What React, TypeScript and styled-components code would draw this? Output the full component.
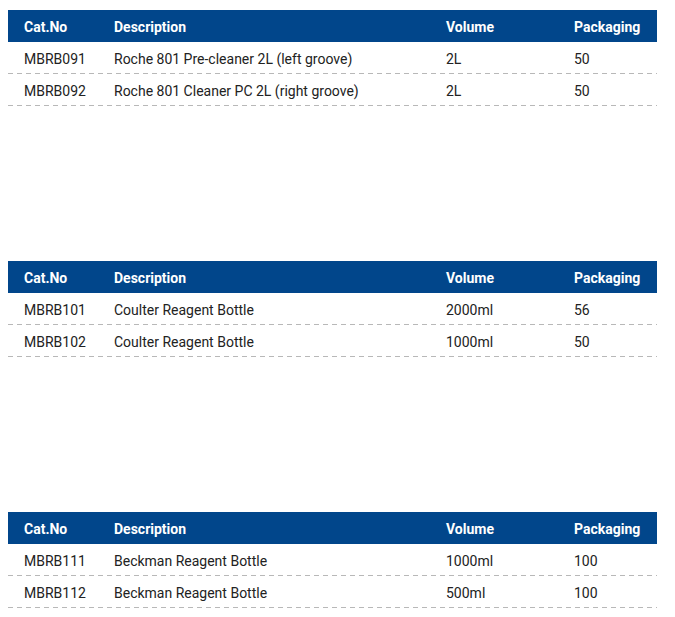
import React from "react";
import styled, { createGlobalStyle } from "styled-components";

const Global = createGlobalStyle`
  body {
    margin: 8px;
    background: #ffffff;
    font-family: Roboto, "Liberation Sans", Arial, sans-serif;
  }
`;

const Page = styled.div`
  display: flex;
  flex-direction: column;
  gap: 155px;
  padding-top: 2px;
  width: 649px;
`;

const Table = styled.div`
  display: flex;
  flex-direction: column;
`;

const Row = styled.div<{ $head?: boolean }>`
  display: grid;
  grid-template-columns: 90px 332px 128px 1fr;
  height: 32px;
  align-items: center;
  box-sizing: border-box;
  font-size: 14px;
  ${(p) =>
    p.$head
      ? `
    background: #01468b;
    color: #ffffff;
    font-weight: 700;
  `
      : `
    color: #222222;
    font-weight: 400;
    background-image: linear-gradient(to right, #b8b8b8 5px, transparent 5px);
    background-size: 9px 1px;
    background-repeat: repeat-x;
    background-position: 0 100%;
  `}
`;

const Cell = styled.div`
  padding-left: 16px;
  padding-top: 2px;
  white-space: nowrap;
  line-height: 30px;
`;

type Item = [string, string, string, string];

const tables: Item[][] = [
  [
    ["MBRB091", "Roche 801 Pre-cleaner 2L (left groove)", "2L", "50"],
    ["MBRB092", "Roche 801 Cleaner PC 2L (right groove)", "2L", "50"],
  ],
  [
    ["MBRB101", "Coulter Reagent Bottle", "2000ml", "56"],
    ["MBRB102", "Coulter Reagent Bottle", "1000ml", "50"],
  ],
  [
    ["MBRB111", "Beckman Reagent Bottle", "1000ml", "100"],
    ["MBRB112", "Beckman Reagent Bottle", "500ml", "100"],
  ],
];

const heads = ["Cat.No", "Description", "Volume", "Packaging"];

export default function App() {
  return (
    <>
      <Global />
      <Page>
        {tables.map((rows, i) => (
          <Table key={i}>
            <Row $head>
              {heads.map((h) => (
                <Cell key={h}>{h}</Cell>
              ))}
            </Row>
            {rows.map((r) => (
              <Row key={r[0]}>
                {r.map((c, j) => (
                  <Cell key={j}>{c}</Cell>
                ))}
              </Row>
            ))}
          </Table>
        ))}
      </Page>
    </>
  );
}
